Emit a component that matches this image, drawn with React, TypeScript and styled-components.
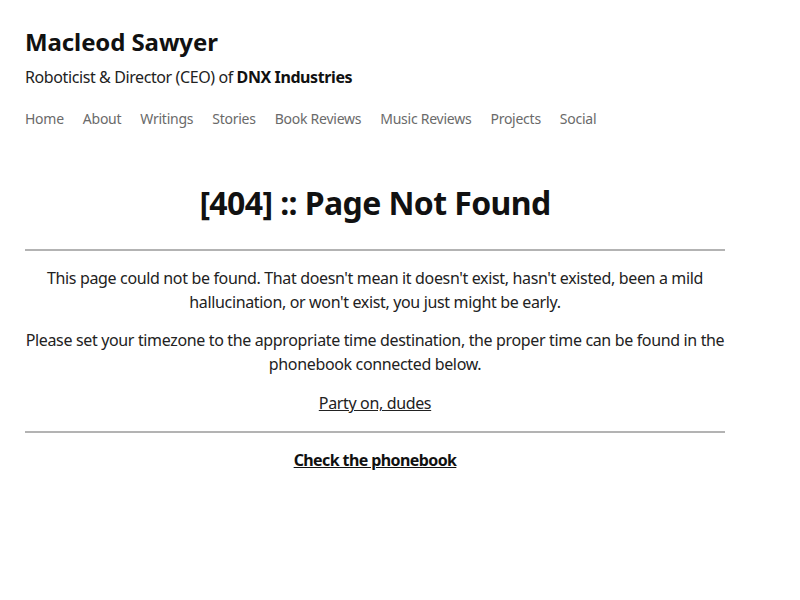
import React from "react";
import styled, { createGlobalStyle } from "styled-components";

const Global = createGlobalStyle`
  html, body { margin: 0; padding: 0; background: #fff; }
  body { font-family: "Noto Sans", "Open Sans", sans-serif; color: #1a1a1a; }
`;

const Page = styled.div`
  width: 700px;
  padding: 23px 25px;
`;

const Header = styled.header`
  display: flex;
  flex-direction: column;
`;

const SiteTitle = styled.h1`
  margin: 0;
  font-size: 24px;
  line-height: 38px;
  font-weight: 700;
  color: #111;
  letter-spacing: -0.1px;
`;

const Tagline = styled.p`
  margin: 2px 0 0;
  font-size: 16px;
  line-height: 28px;
  color: #222;
  letter-spacing: -0.4px;
  b { font-weight: 700; color: #111; }
`;

const Nav = styled.nav`
  display: flex;
  gap: 19px;
  margin-top: 18px;
`;

const NavLink = styled.a`
  font-size: 14px;
  line-height: 20px;
  color: #6a6a6a;
  text-decoration: none;
  letter-spacing: -0.25px;
`;

const Main = styled.main`
  margin-top: 52px;
  text-align: center;
`;

const Heading = styled.h2`
  margin: 0;
  font-size: 32px;
  line-height: 44px;
  font-weight: 700;
  color: #111;
  letter-spacing: -0.6px;
`;

const Rule = styled.hr<{ $top: number; $bottom: number }>`
  border: none;
  height: 2px;
  background: #b3b3b3;
  margin: ${(p) => `${p.$top}px 0 ${p.$bottom}px`};
`;

const Para = styled.p<{ $gap?: number }>`
  margin: 0 0 ${(p) => p.$gap ?? 14}px;
  font-size: 16px;
  line-height: 24px;
  color: #222;
  letter-spacing: -0.35px;
`;

const Underlined = styled.a<{ $bold?: boolean }>`
  font-size: 16px;
  line-height: 24px;
  color: ${(p) => (p.$bold ? "#111" : "#222")};
  text-decoration: underline;
  font-weight: ${(p) => (p.$bold ? 700 : 400)};
  letter-spacing: ${(p) => (p.$bold ? "-0.6px" : "-0.35px")};
`;

export default function App() {
  const links = ["Home", "About", "Writings", "Stories", "Book Reviews", "Music Reviews", "Projects", "Social"];
  return (
    <>
      <Global />
      <Page>
        <Header>
          <SiteTitle>Macleod Sawyer</SiteTitle>
          <Tagline>
            Roboticist &amp; Director (CEO) of <b>DNX Industries</b>
          </Tagline>
          <Nav>
            {links.map((l) => (
              <NavLink key={l} href="#">{l}</NavLink>
            ))}
          </Nav>
        </Header>
        <Main>
          <Heading>[404] :: Page Not Found</Heading>
          <Rule $top={24} $bottom={15} />
          <Para>
            This page could not be found. That doesn't mean it doesn't exist, hasn't existed, been a mild
            hallucination, or won't exist, you just might be early.
          </Para>
          <Para $gap={15}>
            Please set your timezone to the appropriate time destination, the proper time can be found in the
            phonebook connected below.
          </Para>
          <Para $gap={16}>
            <Underlined href="#">Party on, dudes</Underlined>
          </Para>
          <Rule $top={0} $bottom={15} />
          <Para>
            <Underlined href="#" $bold>Check the phonebook</Underlined>
          </Para>
        </Main>
      </Page>
    </>
  );
}
